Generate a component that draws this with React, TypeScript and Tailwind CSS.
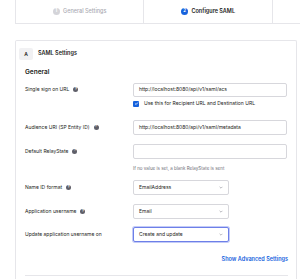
import React from 'react'

const LABEL = 'text-[5px] leading-none text-[#1d1d21]'

function Help() {
  return (
    <span className="ml-[4px] inline-flex h-[5px] w-[5px] items-center justify-center rounded-full bg-[#5f5f69] text-[3.5px] font-bold leading-none text-white">?</span>
  )
}

function Chevron() {
  return (
    <svg width="4" height="3" viewBox="0 0 4 3" className="ml-auto">
      <path d="M0.6 0.8 L2 2.2 L3.4 0.8" fill="none" stroke="#8a8a94" strokeWidth="0.6" />
    </svg>
  )
}

function Row({ label, help = true, children, className = '' }: { label: string; help?: boolean; children: React.ReactNode; className?: string }) {
  return (
    <div className={`flex items-center ${className}`}>
      <div className="flex w-[108px] items-center">
        <span className={LABEL}>{label}</span>
        {help && <Help />}
      </div>
      <div className="flex-1">{children}</div>
    </div>
  )
}

function TextInput({ value = '', h = 'h-[14px]' }: { value?: string; h?: string }) {
  return (
    <div className={`flex ${h} w-[154px] items-center rounded-[2px] border border-[#d7d7dc] bg-white px-[5px]`}>
      <span className="text-[5px] leading-none text-[#1d1d21]">{value}</span>
    </div>
  )
}

function Select({ value, focus = false }: { value: string; focus?: boolean }) {
  return (
    <div
      className={`flex h-[15px] w-[96px] items-center rounded-[2px] border bg-white px-[5px] ${
        focus ? 'border-[#6d7fe8] shadow-[0_0_0_1px_#c3cbf7]' : 'border-[#d7d7dc]'
      }`}
    >
      <span className="text-[5px] leading-none text-[#1d1d21]">{value}</span>
      <Chevron />
    </div>
  )
}

export default function App() {
  return (
    <div className="h-[279px] w-[300px] overflow-hidden bg-white font-['Inter',sans-serif]">
      {/* Steps */}
      <div className="ml-[15px] flex h-[24px] border-b border-l border-[#e6e6ea]">
        <div className="flex w-[128px] items-center justify-center gap-[3px] border-r border-[#e6e6ea]">
          <span className="flex h-[7.5px] w-[7.5px] items-center justify-center rounded-full bg-[#d4d4d9] text-[4.5px] font-bold leading-none text-white">1</span>
          <span className="text-[5.5px] font-medium leading-none text-[#ababb3]">General Settings</span>
        </div>
        <div className="flex w-[129px] items-center justify-center gap-[3px] border-r border-[#e6e6ea]">
          <span className="flex h-[7.5px] w-[7.5px] items-center justify-center rounded-full bg-[#1662dd] text-[4.5px] font-bold leading-none text-white">2</span>
          <span className="text-[5.5px] font-semibold leading-none text-[#1d1d21]">Configure SAML</span>
        </div>
        <div className="flex-1" />
      </div>

      {/* Card */}
      <div className="ml-[15px] mt-[16px] w-[282px] rounded-t-[2px] border border-b-0 border-[#e6e6ea] pb-[8px]">
        <div className="flex items-center px-[3px] pt-[7px]">
          <span className="flex h-[12px] w-[14px] items-center justify-center rounded-[2px] bg-[#f1f1f3] text-[5px] font-semibold leading-none text-[#1d1d21]">A</span>
          <span className="ml-[5px] text-[5.5px] font-semibold leading-none text-[#1d1d21]">SAML Settings</span>
        </div>

        <div className="pl-[9px] pr-[8px]">
          <div className="mt-[9px] text-[6.5px] font-semibold leading-none text-[#1d1d21]">General</div>

          <Row label="Single sign on URL" className="mt-[7px]">
            <TextInput value="http://localhost:8080/api/v1/saml/acs" h="h-[14px]" />
          </Row>
          <div className="ml-[108px] mt-[4px] flex items-center">
            <span className="flex h-[6px] w-[6px] items-center justify-center rounded-[1px] bg-[#1662dd]">
              <svg width="5" height="5" viewBox="0 0 5 5">
                <path d="M1.1 2.6 L2.1 3.5 L3.9 1.5" fill="none" stroke="#fff" strokeWidth="0.8" />
              </svg>
            </span>
            <span className="ml-[5px] text-[5px] leading-none text-[#1d1d21]">Use this for Recipient URL and Destination URL</span>
          </div>

          <Row label="Audience URI (SP Entity ID)" className="mt-[13px]">
            <TextInput value="http://localhost:8080/api/v1/saml/metadata" h="h-[15px]" />
          </Row>

          <Row label="Default RelayState" className="mt-[9px]">
            <TextInput h="h-[15px]" />
          </Row>
          <div className="ml-[108px] mt-[8px] text-[4.5px] leading-none text-[#6e6e78]">If no value is set, a blank RelayState is sent</div>

          <Row label="Name ID format" className="mt-[9px]">
            <Select value="EmailAddress" />
          </Row>
          <Row label="Application username" className="mt-[9px]">
            <Select value="Email" />
          </Row>
          <Row label="Update application username on" help={false} className="mt-[8px]">
            <Select value="Create and update" focus />
          </Row>

          <div className="mt-[15px] flex justify-end">
            <span className="text-[5.5px] font-semibold leading-none text-[#1662dd]">Show Advanced Settings</span>
          </div>
          <div className="mt-[12px] border-t border-[#e6e6ea]" />
        </div>
      </div>
    </div>
  )
}
